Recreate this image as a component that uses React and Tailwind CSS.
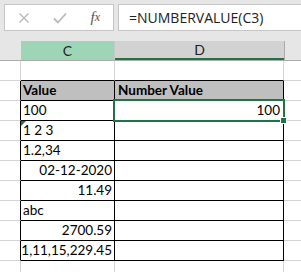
import React from "react";

const rows = [
  { c: "", d: "", empty: true },
  { c: "Value", d: "Number Value", head: true },
  { c: "100", d: "100", dRight: true },
  { c: "1 2 3", d: "", flag: true },
  { c: "1.2,34", d: "" },
  { c: "02-12-2020", d: "", cRight: true },
  { c: "11.49", d: "", cRight: true },
  { c: "abc", d: "" },
  { c: "2700.59", d: "", cRight: true },
  { c: "1,11,15,229.45", d: "", cRight: true },
];

const font = { fontFamily: "Lato, 'Liberation Sans', sans-serif" };

const App = () => {
  return (
    <div
      className="relative w-[301px] h-[272px] overflow-hidden bg-white text-[13.5px] text-black"
      style={font}
    >
      {/* Formula bar */}
      <div className="h-[41px] bg-[#e6e6e6] flex items-start pt-[4px] pl-[4px] gap-[4px]">
        <div className="w-[110px] h-[27px] bg-white border border-[#c6c6c6] flex items-center">
          <span className="w-[38px] flex justify-center">
            <svg width="12" height="12" viewBox="0 0 12 12">
              <path d="M1.5 1.5L10.5 10.5M10.5 1.5L1.5 10.5" stroke="#b9b9b9" strokeWidth="1.4" />
            </svg>
          </span>
          <span className="w-[36px] flex justify-center">
            <svg width="14" height="12" viewBox="0 0 14 12">
              <path d="M1 6.5L5 10.5L13 1.5" stroke="#b9b9b9" strokeWidth="1.8" fill="none" />
            </svg>
          </span>
          <span
            className="w-[36px] flex justify-center italic text-[15px] text-[#555]"
            style={{ fontFamily: "'Liberation Serif', serif" }}
          >
            f<span className="text-[12px] mt-[2px]">x</span>
          </span>
        </div>
        <div className="flex-1 h-[27px] bg-white border border-[#c6c6c6] border-r-0 flex items-center pl-[10px]">
          <span className="text-[14px] text-[#222]" style={{ fontFamily: "'Open Sans', sans-serif" }}>
            =NUMBERVALUE(C3)
          </span>
        </div>
      </div>

      {/* Column headers */}
      <div className="flex h-[20px] border-b border-[#ababab] bg-[#e6e6e6] text-[14px]">
        <div className="w-[21px]" />
        <div className="w-[94px] bg-[#9fd5b7] border-r border-[#c8c8c8] flex items-center justify-center text-[#222]">
          C
        </div>
        <div className="w-[169px] bg-[#d2d2d2] border-b-2 border-[#217346] flex items-center justify-center text-[#222]">
          D
        </div>
        <div className="flex-1 border-l border-[#ababab]" />
      </div>

      {/* Cells */}
      {rows.map((r, i) => {
        const black = !r.empty;
        return (
          <div key={i} className="flex h-[20px]">
            <div
              className={`w-[21px] border-b border-[#d4d4d4] border-r ${black ? "border-r-black" : "border-r-[#d4d4d4]"}`}
            />
            <div
              className={`relative w-[94px] border-b border-r border-black flex items-end pb-[2px] px-[2px] ${r.head ? "bg-[#bfbfbf] font-bold" : ""} ${r.cRight ? "justify-end" : ""} ${r.empty ? "border-r-[#d4d4d4]" : ""}`}
            >
              {r.flag && (
                <svg className="absolute left-0 top-0" width="5" height="5" viewBox="0 0 5 5">
                  <path d="M0 0H5L0 5Z" fill="#217346" />
                </svg>
              )}
              <span className="leading-[16px]">{r.c}</span>
            </div>
            <div
              className={`w-[169px] border-b border-r border-black flex items-end pb-[2px] px-[3px] ${r.head ? "bg-[#bfbfbf] font-bold" : ""} ${r.dRight ? "justify-end" : ""} ${r.empty ? "border-r-[#d4d4d4]" : ""}`}
            >
              <span className="leading-[16px]">{r.d}</span>
            </div>
            <div className="flex-1 border-b border-[#d4d4d4]" />
          </div>
        );
      })}
      <div className="flex h-[20px]">
        <div className="w-[21px] border-r border-[#d4d4d4]" />
        <div className="w-[94px] border-r border-[#d4d4d4]" />
        <div className="w-[169px] border-r border-[#d4d4d4]" />
      </div>

      {/* Selection */}
      <div className="absolute left-[113px] top-[99px] w-[172px] h-[23px] border-2 border-[#217346]" />
      <div className="absolute left-[280px] top-[117px] w-[7px] h-[7px] bg-[#217346] border border-white" />
    </div>
  );
};

export default App;
